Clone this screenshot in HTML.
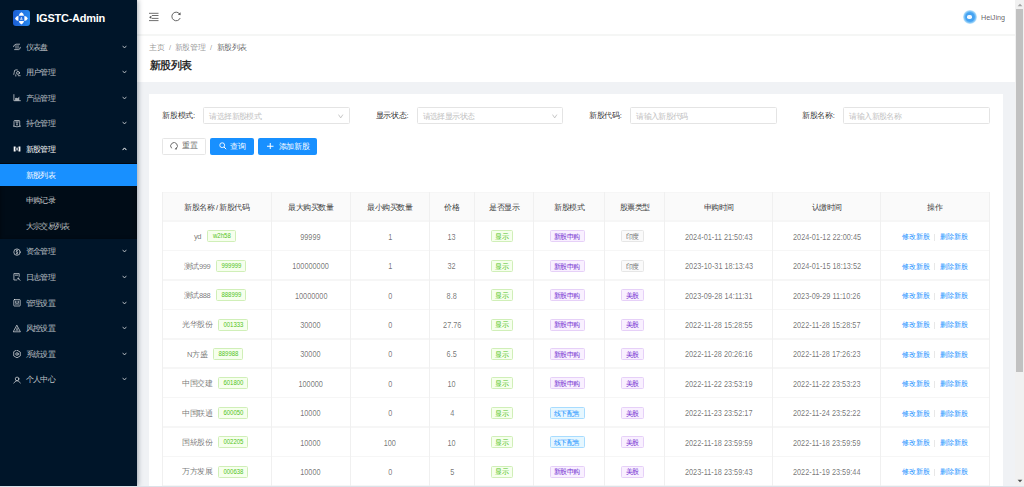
<!DOCTYPE html>
<html><head><meta charset="utf-8">
<style>
*{box-sizing:border-box;margin:0;padding:0}
html,body{width:1024px;height:487px;overflow:hidden;background:#f0f2f5;font-family:"Liberation Sans",sans-serif;}
#side{position:absolute;left:0;top:0;width:136.5px;height:485.5px;background:#001529;box-shadow:1px 0 5px rgba(0,21,41,.35);z-index:3;overflow:hidden}
#logo{position:absolute;left:13.2px;top:9.7px;width:16.8px;height:16.8px;border-radius:3px;background:linear-gradient(90deg,#1c5ed4,#2588f0)}
#brand{position:absolute;left:36.3px;top:9px;font-size:11px;letter-spacing:-0.25px;font-weight:bold;color:#fff;line-height:18px;white-space:nowrap}
.mi{position:absolute;left:0;width:136.5px;height:20px;color:rgba(255,255,255,.65);font-size:7.7px;line-height:20px;white-space:nowrap}
.mi .t{position:absolute;left:25.7px;top:0.6px;letter-spacing:-0.7px}
.mi svg{position:absolute}
#sub{position:absolute;left:0;top:162.5px;width:136.5px;height:76.5px;background:#000c17;box-shadow:inset 0 1px 4px rgba(0,0,0,.45)}
#act{position:absolute;left:0;top:164px;width:136.5px;height:22px;background:#1890ff}
#hdr{position:absolute;left:137px;top:0;width:879px;height:36px;background:#fff;border-bottom:2px solid #f5f6f5}
#crumb{position:absolute;left:137px;top:36px;width:879px;height:45.5px;background:#fff}
#sb{position:absolute;left:1015px;top:0;width:9px;height:487px;background:#f1f1f1;z-index:4}
#thumb{position:absolute;left:1.3px;top:9px;width:6.8px;height:363px;background:#c1c1c1}
#bstrip{position:absolute;left:0;top:485.5px;width:1024px;height:1.5px;background:#dce2e9;z-index:5}
#card{position:absolute;left:149px;top:94px;width:854px;height:400px;background:#fff}
.txt{position:absolute;white-space:nowrap}
.lbl{position:absolute;font-size:7.7px;letter-spacing:-0.3px;color:rgba(0,0,0,.85);line-height:10px;white-space:nowrap}
.inp{position:absolute;top:107px;width:147px;height:17px;border:1px solid #e4e4e4;border-radius:1.5px;background:#fff;font-size:7.7px;letter-spacing:-0.65px;line-height:15px;color:#bfbfbf;padding-left:6px;white-space:nowrap}
.btn{position:absolute;top:137.5px;height:17px;border-radius:2px;font-size:7.7px;line-height:15px;white-space:nowrap}
table{position:absolute;left:162px;top:192px;border-collapse:collapse;table-layout:fixed;font-size:7.6px;color:rgba(0,0,0,.65)}
td,th{border:0.8px solid #ebebeb;text-align:center;white-space:nowrap;font-weight:normal}
th{background:#fafafa;color:rgba(0,0,0,.85);height:29px}
td{height:29.4px}
.tag{position:relative;top:-0.8px;display:inline-block;border:1px solid;border-radius:1.5px;font-size:7px;letter-spacing:-0.6px;line-height:10px;height:12px;padding:0.7px 4px 0 3.4px;vertical-align:middle;margin-right:4.4px}
.tag.n{padding:0 3.8px;letter-spacing:0}
.numt{display:inline-block;font-size:7.9px;line-height:10px;height:10px;vertical-align:top;text-align:center;transform:scaleX(.76)}
.g{color:#52c41a;background:#f6ffed;border-color:#d0efb8}
.p{color:#722ed1;background:#f9f0ff;border-color:#e6d0f8}
.d{color:rgba(0,0,0,.6);background:#fafafa;border-color:#e6e6e6}
.cy{color:#1890ff;background:#e6f7ff;border-color:#a8dcff}
.num{display:inline-block;position:relative;top:0.5px;font-size:8.2px;transform:scaleX(.895);line-height:12px}
.lk{color:#1890ff;font-size:7.4px;letter-spacing:-0.1px}
.cell{position:absolute;height:12px;line-height:12px;text-align:center;white-space:nowrap}
.dv{display:inline-block;width:1px;height:7px;background:#e8e8e8;margin:0 4.5px;vertical-align:middle}
</style></head><body>
<div id="side">
<div id="sub"></div>
<div id="act"></div>
<div id="logo"><svg width="16.8" height="16.8" viewBox="0 0 17 17" style="position:absolute;left:0;top:0"><g fill="#fff"><path d="M8.5 2.3 Q10.6 3.2 11.2 5.8 H5.8 Q6.4 3.2 8.5 2.3 Z"/><path d="M5.8 11.2 H11.2 Q10.6 13.8 8.5 14.7 Q6.4 13.8 5.8 11.2 Z"/><path d="M2.3 8.5 Q3.2 6.4 5.8 5.8 V11.2 Q3.2 10.6 2.3 8.5 Z" transform="translate(-0.3 0)"/><path d="M14.7 8.5 Q13.8 6.4 11.2 5.8 V11.2 Q13.8 10.6 14.7 8.5 Z" transform="translate(0.3 0)"/></g><rect x="6.3" y="6.3" width="4.4" height="4.4" fill="#1f6ae0"/><path d="M7.6 10.2 L8.5 7.3 L9.4 10.2 M7.9 9.3 H9.1" stroke="#fff" stroke-width="0.6" fill="none"/></svg></div>
<div id="brand">IGSTC-Admin</div>
<div class="mi" style="top:37.00px;color:rgba(255,255,255,.65)"><svg style="left:12.5px;top:6px" width="8" height="8" viewBox="0 0 8 8"><path d="M0.5 3.7 Q1.2 1.3 3 1.2 H6.6" stroke="rgba(255,255,255,.65)" stroke-width="0.95" fill="none" stroke-linecap="round" stroke-linejoin="round"/><path d="M3 2.6 V5.3 M5 2.6 V5.3" stroke="rgba(255,255,255,.65)" stroke-width="0.95" fill="none" stroke-linecap="round" stroke-linejoin="round"/><path d="M1.6 6.6 H5.6 Q7.2 6.4 7.4 4.3" stroke="rgba(255,255,255,.65)" stroke-width="0.95" fill="none" stroke-linecap="round" stroke-linejoin="round"/></svg><span class="t" style="color:rgba(255,255,255,.74)">仪表盘</span><svg style="left:122px;top:7.7px" width="5" height="4" viewBox="0 0 5 4"><path d="M0.6 0.8 L2.5 3 L4.4 0.8" stroke="rgba(255,255,255,.65)" stroke-width="1" fill="none"/></svg></div>
<div class="mi" style="top:62.60px;color:rgba(255,255,255,.65)"><svg style="left:12.5px;top:6px" width="8" height="8" viewBox="0 0 8 8"><circle cx="5" cy="3.9" r="1.45" stroke="rgba(255,255,255,.65)" stroke-width="0.95" fill="none" stroke-linecap="round" stroke-linejoin="round"/><path d="M0.8 5.4 Q1.2 3.6 1.6 1.4 Q2.8 0.5 4.4 0.9" stroke="rgba(255,255,255,.65)" stroke-width="0.95" fill="none" stroke-linecap="round" stroke-linejoin="round"/><path d="M2.8 5.8 V7.1 M5.3 6.7 H7.2" stroke="rgba(255,255,255,.65)" stroke-width="0.95" fill="none" stroke-linecap="round" stroke-linejoin="round"/></svg><span class="t" style="color:rgba(255,255,255,.74)">用户管理</span><svg style="left:122px;top:7.7px" width="5" height="4" viewBox="0 0 5 4"><path d="M0.6 0.8 L2.5 3 L4.4 0.8" stroke="rgba(255,255,255,.65)" stroke-width="1" fill="none"/></svg></div>
<div class="mi" style="top:88.20px;color:rgba(255,255,255,.65)"><svg style="left:12.5px;top:6px" width="8" height="8" viewBox="0 0 8 8"><path d="M0.9 0.6 V6.7 H7.4" stroke="rgba(255,255,255,.65)" stroke-width="0.95" fill="none" stroke-linecap="round" stroke-linejoin="round"/><path d="M2.1 6.6 V4 L3.4 3.7 L4.7 4.3 L6.3 2.6 V6.6 Z" fill="rgba(255,255,255,.65)"/></svg><span class="t" style="color:rgba(255,255,255,.74)">产品管理</span><svg style="left:122px;top:7.7px" width="5" height="4" viewBox="0 0 5 4"><path d="M0.6 0.8 L2.5 3 L4.4 0.8" stroke="rgba(255,255,255,.65)" stroke-width="1" fill="none"/></svg></div>
<div class="mi" style="top:113.80px;color:rgba(255,255,255,.65)"><svg style="left:12.5px;top:6px" width="8" height="8" viewBox="0 0 8 8"><path d="M1 5.8 V1.2 Q1 0.5 1.7 0.5 H6 Q6.7 0.5 6.7 1.2 V5.8" stroke="rgba(255,255,255,.65)" stroke-width="0.95" fill="none" stroke-linecap="round" stroke-linejoin="round"/><path d="M0.4 6.2 Q4 7.6 7.6 6.2" stroke="rgba(255,255,255,.65)" stroke-width="0.95" fill="none" stroke-linecap="round" stroke-linejoin="round"/><path d="M2.7 1.9 H5.4 M4 2.3 V5.2" stroke="rgba(255,255,255,.65)" stroke-width="0.95" fill="none" stroke-linecap="round" stroke-linejoin="round"/><path d="M3.3 5 H4.7 L4 3.8 Z" fill="rgba(255,255,255,.65)"/></svg><span class="t" style="color:rgba(255,255,255,.74)">持仓管理</span><svg style="left:122px;top:7.7px" width="5" height="4" viewBox="0 0 5 4"><path d="M0.6 0.8 L2.5 3 L4.4 0.8" stroke="rgba(255,255,255,.65)" stroke-width="1" fill="none"/></svg></div>
<div class="mi" style="top:139.40px;color:#fff"><svg style="left:12.5px;top:6px" width="8" height="8" viewBox="0 0 8 8"><path d="M0.7 1.4 H2.6 V3.2 L2.1 4 L2.6 4.8 V6.5 H0.7 Z" fill="#fff"/><path d="M7.4 1.4 H5.5 V3.2 L6 4 L5.5 4.8 V6.5 H7.4 Z" fill="#fff"/><path d="M4.05 1.8 L4.8 4 L4.05 6.3 L3.3 4 Z" fill="#fff"/></svg><span class="t" style="color:#fff">新股管理</span><svg style="left:122px;top:7.7px" width="5" height="4" viewBox="0 0 5 4"><path d="M0.6 3.1 L2.5 0.9 L4.4 3.1" stroke="#fff" stroke-width="1" fill="none"/></svg></div>
<div class="mi" style="top:165.00px;color:#fff"><span class="t" style="color:#fff">新股列表</span></div>
<div class="mi" style="top:190.60px;color:rgba(255,255,255,.65)"><span class="t" style="color:rgba(255,255,255,.74)">申购记录</span></div>
<div class="mi" style="top:216.20px;color:rgba(255,255,255,.65)"><span class="t" style="color:rgba(255,255,255,.74)">大宗交易列表</span></div>
<div class="mi" style="top:241.80px;color:rgba(255,255,255,.65)"><svg style="left:12.5px;top:6px" width="8" height="8" viewBox="0 0 8 8"><circle cx="4" cy="4.1" r="3.2" stroke="rgba(255,255,255,.65)" stroke-width="0.95" fill="none" stroke-linecap="round" stroke-linejoin="round"/><path d="M4.8 2.5 Q3.3 2 3.1 3.1 Q3.2 3.9 4 4.1 Q4.9 4.4 4.6 5.3 Q4 5.9 3 5.4 M4 1.6 V6.6" stroke="rgba(255,255,255,.65)" stroke-width="0.75" fill="none"/></svg><span class="t" style="color:rgba(255,255,255,.74)">资金管理</span><svg style="left:122px;top:7.7px" width="5" height="4" viewBox="0 0 5 4"><path d="M0.6 0.8 L2.5 3 L4.4 0.8" stroke="rgba(255,255,255,.65)" stroke-width="1" fill="none"/></svg></div>
<div class="mi" style="top:267.40px;color:rgba(255,255,255,.65)"><svg style="left:12.5px;top:6px" width="8" height="8" viewBox="0 0 8 8"><path d="M6.2 3.4 V0.6 H0.9 V7 H3.8" stroke="rgba(255,255,255,.65)" stroke-width="0.95" fill="none" stroke-linecap="round" stroke-linejoin="round"/><path d="M2.3 2.2 H4.8" stroke="rgba(255,255,255,.65)" stroke-width="0.95" fill="none" stroke-linecap="round" stroke-linejoin="round"/><circle cx="5.3" cy="5.6" r="1" fill="rgba(255,255,255,.65)"/><path d="M6 6.3 L7.2 7.3" stroke="rgba(255,255,255,.65)" stroke-width="0.95" fill="none" stroke-linecap="round" stroke-linejoin="round"/></svg><span class="t" style="color:rgba(255,255,255,.74)">日志管理</span><svg style="left:122px;top:7.7px" width="5" height="4" viewBox="0 0 5 4"><path d="M0.6 0.8 L2.5 3 L4.4 0.8" stroke="rgba(255,255,255,.65)" stroke-width="1" fill="none"/></svg></div>
<div class="mi" style="top:293.00px;color:rgba(255,255,255,.65)"><svg style="left:12.5px;top:6px" width="8" height="8" viewBox="0 0 8 8"><rect x="0.8" y="0.6" width="6.4" height="6.4" rx="0.6" stroke="rgba(255,255,255,.65)" stroke-width="0.95" fill="none" stroke-linecap="round" stroke-linejoin="round"/><path d="M2.6 1.5 V6 M4 1.5 V6 M5.4 1.5 V6" stroke="rgba(255,255,255,.65)" stroke-width="0.55"/><path d="M2.6 2.4 V3.4 M4 4.2 V5.2 M5.4 2.4 V3.4" stroke="rgba(255,255,255,.65)" stroke-width="1.2"/></svg><span class="t" style="color:rgba(255,255,255,.74)">管理设置</span><svg style="left:122px;top:7.7px" width="5" height="4" viewBox="0 0 5 4"><path d="M0.6 0.8 L2.5 3 L4.4 0.8" stroke="rgba(255,255,255,.65)" stroke-width="1" fill="none"/></svg></div>
<div class="mi" style="top:318.60px;color:rgba(255,255,255,.65)"><svg style="left:12.5px;top:6px" width="8" height="8" viewBox="0 0 8 8"><path d="M4 0.5 L7.4 6.8 H0.6 Z" stroke="rgba(255,255,255,.65)" stroke-width="0.95" fill="none" stroke-linecap="round" stroke-linejoin="round"/><circle cx="4" cy="3.2" r="0.7" fill="rgba(255,255,255,.65)"/><path d="M3 6 L3.4 4.6 H4.6 L5 6" stroke="rgba(255,255,255,.65)" stroke-width="0.8" fill="none"/></svg><span class="t" style="color:rgba(255,255,255,.74)">风控设置</span><svg style="left:122px;top:7.7px" width="5" height="4" viewBox="0 0 5 4"><path d="M0.6 0.8 L2.5 3 L4.4 0.8" stroke="rgba(255,255,255,.65)" stroke-width="1" fill="none"/></svg></div>
<div class="mi" style="top:344.20px;color:rgba(255,255,255,.65)"><svg style="left:12.5px;top:6px" width="8" height="8" viewBox="0 0 8 8"><path d="M4 0.2 L7.3 2.1 V5.9 L4 7.8 L0.7 5.9 V2.1 Z" stroke="rgba(255,255,255,.65)" stroke-width="0.95" fill="none" stroke-linecap="round" stroke-linejoin="round"/><circle cx="4" cy="4" r="1.3" stroke="rgba(255,255,255,.65)" stroke-width="0.95" fill="none" stroke-linecap="round" stroke-linejoin="round"/></svg><span class="t" style="color:rgba(255,255,255,.74)">系统设置</span><svg style="left:122px;top:7.7px" width="5" height="4" viewBox="0 0 5 4"><path d="M0.6 0.8 L2.5 3 L4.4 0.8" stroke="rgba(255,255,255,.65)" stroke-width="1" fill="none"/></svg></div>
<div class="mi" style="top:369.80px;color:rgba(255,255,255,.65)"><svg style="left:12.5px;top:6px" width="8" height="8" viewBox="0 0 8 8"><circle cx="4.1" cy="2.9" r="1.8" stroke="rgba(255,255,255,.65)" stroke-width="0.95" fill="none" stroke-linecap="round" stroke-linejoin="round"/><path d="M0.8 7 L2.8 5.1 M5.4 5.1 L7.4 7" stroke="rgba(255,255,255,.65)" stroke-width="0.95" fill="none" stroke-linecap="round" stroke-linejoin="round"/><path d="M2.8 5.1 H5.4" stroke="rgba(255,255,255,.65)" stroke-width="0.6"/></svg><span class="t" style="color:rgba(255,255,255,.74)">个人中心</span><svg style="left:122px;top:7.7px" width="5" height="4" viewBox="0 0 5 4"><path d="M0.6 0.8 L2.5 3 L4.4 0.8" stroke="rgba(255,255,255,.65)" stroke-width="1" fill="none"/></svg></div>
</div>
<div id="hdr"><svg style="position:absolute;left:11.8px;top:12px" width="10" height="10" viewBox="0 0 10 10"><path d="M0 1.3 H9.5 M3 3.5 H9.5 M3 6.4 H9.5 M0 8.6 H9.5" stroke="#555" stroke-width="0.85"/><path d="M0.1 5.2 L2.4 3.6 V6.9 Z" fill="#555"/></svg><svg style="position:absolute;left:33.5px;top:10.5px" width="11" height="11" viewBox="0 0 11 11"><path d="M8.9 3.3 A4.3 4.3 0 1 0 9.2 7" stroke="#555" stroke-width="0.9" fill="none"/><path d="M9.6 1.3 L9.5 4.2 L6.8 3.6 Z" fill="#555"/></svg><div style="position:absolute;left:826.3px;top:9.8px;width:14px;height:14px;border-radius:50%;background:radial-gradient(circle closest-side,#45a3f2 0,#45a3f2 62%,#8fcdf8 85%,#cfeafc 100%)"></div><div style="position:absolute;left:829.6px;top:15.4px;width:5.6px;height:3.9px;border-radius:1.8px;background:#f4f9ff"></div><div class="txt" style="left:844px;top:11.5px;font-size:7.2px;line-height:12px;color:rgba(0,0,0,.65)">HeiJing</div></div>
<div id="crumb"><div class="txt" style="left:12.3px;top:6.6px;font-size:7.5px;line-height:10px;color:rgba(0,0,0,.45)">主页</div><div class="txt" style="left:32px;top:6.6px;font-size:7.5px;line-height:10px;color:rgba(0,0,0,.45)">/</div><div class="txt" style="left:37.8px;top:6.6px;font-size:7.5px;letter-spacing:-0.35px;line-height:10px;color:rgba(0,0,0,.45)">新股管理</div><div class="txt" style="left:73px;top:6.6px;font-size:7.5px;line-height:10px;color:rgba(0,0,0,.45)">/</div><div class="txt" style="left:80px;top:6.6px;font-size:7.5px;letter-spacing:-0.55px;line-height:10px;color:rgba(0,0,0,.65)">新股列表</div><div class="txt" style="left:12.5px;top:22.1px;font-size:11px;letter-spacing:-0.5px;line-height:14px;font-weight:bold;color:rgba(0,0,0,.85)">新股列表</div></div>
<div id="card"></div>
<div class="lbl" style="left:162.2px;top:110.5px">新股模式:</div>
<div class="inp" style="left:203.3px;top:107.2px;width:146.5px;height:17.3px"><span style="position:absolute;left:5.2px;top:0.5px">请选择新股模式</span><svg style="position:absolute;left:134.1px;top:5.6px" width="6" height="5" viewBox="0 0 6 5"><path d="M0.5 0.6 L2.7 3.9 L4.9 0.6" stroke="#bdbdbd" stroke-width="0.85" fill="none"/></svg></div>
<div class="lbl" style="left:375.6px;top:110.5px">显示状态:</div>
<div class="inp" style="left:416.6px;top:107.2px;width:146.5px;height:17.3px"><span style="position:absolute;left:5.2px;top:0.5px">请选择显示状态</span><svg style="position:absolute;left:134.1px;top:5.6px" width="6" height="5" viewBox="0 0 6 5"><path d="M0.5 0.6 L2.7 3.9 L4.9 0.6" stroke="#bdbdbd" stroke-width="0.85" fill="none"/></svg></div>
<div class="lbl" style="left:588.9px;top:110.5px">新股代码:</div>
<div class="inp" style="left:630.2px;top:107.2px;width:146.5px;height:17.3px"><span style="position:absolute;left:5.2px;top:0.5px">请输入新股代码</span></div>
<div class="lbl" style="left:802.0px;top:110.5px">新股名称:</div>
<div class="inp" style="left:843.3px;top:107.2px;width:146.5px;height:17.3px"><span style="position:absolute;left:5.2px;top:0.5px">请输入新股名称</span></div>
<div class="btn" style="left:162.4px;width:43.2px;border:1px solid #e6e6e6;border-radius:1.5px;background:#fff;color:rgba(0,0,0,.65)"><svg style="position:absolute;left:7.0px;top:3.4px" width="8" height="8" viewBox="0 0 8 8"><path d="M1.7 6.3 A3.35 3.35 0 1 1 5.9 6.7" stroke="#555" stroke-width="0.85" fill="none"/><path d="M4.6 7.3 L6.6 5.3 L6.8 7.4 Z" fill="#555"/></svg><span style="position:absolute;left:18.8px;top:-0.1px;letter-spacing:-0.4px">重置</span></div>
<div class="btn" style="left:210.1px;width:43.9px;background:#1890ff;color:#fff"><svg style="position:absolute;left:8.5px;top:4.3px" width="8" height="8" viewBox="0 0 8 8"><circle cx="3.2" cy="3.2" r="2.4" stroke="#fff" stroke-width="0.9" fill="none"/><path d="M5 5 L7.2 7.2" stroke="#fff" stroke-width="1"/></svg><span style="position:absolute;left:20.2px;top:1px;letter-spacing:-0.3px">查询</span></div>
<div class="btn" style="left:258.2px;width:58.8px;background:#1890ff;color:#fff"><svg style="position:absolute;left:9.3px;top:5.2px" width="6.5" height="6.5" viewBox="0 0 6.5 6.5"><path d="M3.25 0 V6.5 M0 3.25 H6.5" stroke="#fff" stroke-width="1"/></svg><span style="position:absolute;left:20.6px;top:1px;letter-spacing:-0.4px">添加新股</span></div>
<div id="tbl">
<div style="position:absolute;left:162.2px;top:192.0px;width:827.0999999999999px;height:29.5px;background:#fafafa"></div>
<div style="position:absolute;left:162.2px;top:191.80px;width:827.0999999999999px;height:1.6px;background:#f6f6f6"></div>
<div style="position:absolute;left:162.2px;top:220.40px;width:827.0999999999999px;height:1.6px;background:#f6f6f6"></div>
<div style="position:absolute;left:162.2px;top:249.80px;width:827.0999999999999px;height:1.6px;background:#f6f6f6"></div>
<div style="position:absolute;left:162.2px;top:279.20px;width:827.0999999999999px;height:1.6px;background:#f6f6f6"></div>
<div style="position:absolute;left:162.2px;top:308.60px;width:827.0999999999999px;height:1.6px;background:#f6f6f6"></div>
<div style="position:absolute;left:162.2px;top:338.00px;width:827.0999999999999px;height:1.6px;background:#f6f6f6"></div>
<div style="position:absolute;left:162.2px;top:367.40px;width:827.0999999999999px;height:1.6px;background:#f6f6f6"></div>
<div style="position:absolute;left:162.2px;top:396.80px;width:827.0999999999999px;height:1.6px;background:#f6f6f6"></div>
<div style="position:absolute;left:162.2px;top:426.20px;width:827.0999999999999px;height:1.6px;background:#f6f6f6"></div>
<div style="position:absolute;left:162.2px;top:455.60px;width:827.0999999999999px;height:1.6px;background:#f6f6f6"></div>
<div style="position:absolute;left:162.2px;top:485.00px;width:827.0999999999999px;height:1.6px;background:#f6f6f6"></div>
<div style="position:absolute;left:161.70px;top:192.0px;width:1px;height:294.09999999999997px;background:#f0f0f0"></div>
<div style="position:absolute;left:270.90px;top:192.0px;width:1px;height:294.09999999999997px;background:#f0f0f0"></div>
<div style="position:absolute;left:349.80px;top:192.0px;width:1px;height:294.09999999999997px;background:#f0f0f0"></div>
<div style="position:absolute;left:429.10px;top:192.0px;width:1px;height:294.09999999999997px;background:#f0f0f0"></div>
<div style="position:absolute;left:473.90px;top:192.0px;width:1px;height:294.09999999999997px;background:#f0f0f0"></div>
<div style="position:absolute;left:533.30px;top:192.0px;width:1px;height:294.09999999999997px;background:#f0f0f0"></div>
<div style="position:absolute;left:604.20px;top:192.0px;width:1px;height:294.09999999999997px;background:#f0f0f0"></div>
<div style="position:absolute;left:664.20px;top:192.0px;width:1px;height:294.09999999999997px;background:#f0f0f0"></div>
<div style="position:absolute;left:772.30px;top:192.0px;width:1px;height:294.09999999999997px;background:#f0f0f0"></div>
<div style="position:absolute;left:880.10px;top:192.0px;width:1px;height:294.09999999999997px;background:#f0f0f0"></div>
<div style="position:absolute;left:988.80px;top:192.0px;width:1px;height:294.09999999999997px;background:#f0f0f0"></div>
<div class="cell" style="left:162.2px;width:109.19999999999999px;top:202.15px;color:rgba(0,0,0,.8);font-size:7.5px"><span style="letter-spacing:-0.45px">新股名称 / 新股代码</span></div>
<div class="cell" style="left:271.4px;width:78.90000000000003px;top:202.15px;color:rgba(0,0,0,.8);font-size:7.5px"><span style="letter-spacing:-0.45px">最大购买数量</span></div>
<div class="cell" style="left:350.3px;width:79.30000000000001px;top:202.15px;color:rgba(0,0,0,.8);font-size:7.5px"><span style="letter-spacing:-0.45px">最小购买数量</span></div>
<div class="cell" style="left:429.6px;width:44.799999999999955px;top:202.15px;color:rgba(0,0,0,.8);font-size:7.5px"><span style="letter-spacing:-0.45px">价格</span></div>
<div class="cell" style="left:474.4px;width:59.39999999999998px;top:202.15px;color:rgba(0,0,0,.8);font-size:7.5px"><span style="letter-spacing:-0.45px">是否显示</span></div>
<div class="cell" style="left:533.8px;width:70.90000000000009px;top:202.15px;color:rgba(0,0,0,.8);font-size:7.5px"><span style="letter-spacing:-0.45px">新股模式</span></div>
<div class="cell" style="left:604.7px;width:60.0px;top:202.15px;color:rgba(0,0,0,.8);font-size:7.5px"><span style="letter-spacing:-0.45px">股票类型</span></div>
<div class="cell" style="left:664.7px;width:108.09999999999991px;top:202.15px;color:rgba(0,0,0,.8);font-size:7.5px"><span style="letter-spacing:-0.45px">申购时间</span></div>
<div class="cell" style="left:772.8px;width:107.80000000000007px;top:202.15px;color:rgba(0,0,0,.8);font-size:7.5px"><span style="letter-spacing:-0.45px">认缴时间</span></div>
<div class="cell" style="left:880.6px;width:108.69999999999993px;top:202.15px;color:rgba(0,0,0,.8);font-size:7.5px"><span style="letter-spacing:-0.45px">操作</span></div>
<div class="cell" style="left:162.2px;width:109.19999999999999px;top:231.20px;color:rgba(0,0,0,.56);font-size:7.5px"><span style="letter-spacing:-0.4px">yd</span><span class="tag g n" style="margin-left:6px;margin-right:3.3px"><span class="numt" style="width:25.79px;margin:0 -3.09px">w2h58</span></span></div>
<div class="cell" style="left:271.4px;width:78.90000000000003px;top:231.20px;color:rgba(0,0,0,.56);font-size:7.5px"><span class="num">99999</span></div>
<div class="cell" style="left:350.3px;width:79.30000000000001px;top:231.20px;color:rgba(0,0,0,.56);font-size:7.5px"><span class="num">1</span></div>
<div class="cell" style="left:429.6px;width:44.799999999999955px;top:231.20px;color:rgba(0,0,0,.56);font-size:7.5px"><span class="num">13</span></div>
<div class="cell" style="left:474.4px;width:59.39999999999998px;top:231.20px;color:rgba(0,0,0,.56);font-size:7.5px"><span class="tag g">显示</span></div>
<div class="cell" style="left:533.8px;width:70.90000000000009px;top:231.20px;color:rgba(0,0,0,.56);font-size:7.5px"><span class="tag p">新股申购</span></div>
<div class="cell" style="left:604.7px;width:60.0px;top:231.20px;color:rgba(0,0,0,.56);font-size:7.5px"><span class="tag d">印度</span></div>
<div class="cell" style="left:664.7px;width:108.09999999999991px;top:231.20px;color:rgba(0,0,0,.56);font-size:7.5px"><span class="num">2024-01-11 21:50:43</span></div>
<div class="cell" style="left:772.8px;width:107.80000000000007px;top:231.20px;color:rgba(0,0,0,.56);font-size:7.5px"><span class="num">2024-01-12 22:00:45</span></div>
<div class="cell" style="left:880.6px;width:108.69999999999993px;top:231.20px;color:rgba(0,0,0,.56);font-size:7.5px"><span class="lk">修改新股</span><span class="dv"></span><span class="lk">删除新股</span></div>
<div class="cell" style="left:162.2px;width:109.19999999999999px;top:260.60px;color:rgba(0,0,0,.56);font-size:7.5px"><span style="letter-spacing:-0.4px">测试999</span><span class="tag g n" style="margin-left:6px;margin-right:3.3px"><span class="numt" style="width:26.84px;margin:0 -3.22px">999999</span></span></div>
<div class="cell" style="left:271.4px;width:78.90000000000003px;top:260.60px;color:rgba(0,0,0,.56);font-size:7.5px"><span class="num">100000000</span></div>
<div class="cell" style="left:350.3px;width:79.30000000000001px;top:260.60px;color:rgba(0,0,0,.56);font-size:7.5px"><span class="num">1</span></div>
<div class="cell" style="left:429.6px;width:44.799999999999955px;top:260.60px;color:rgba(0,0,0,.56);font-size:7.5px"><span class="num">32</span></div>
<div class="cell" style="left:474.4px;width:59.39999999999998px;top:260.60px;color:rgba(0,0,0,.56);font-size:7.5px"><span class="tag g">显示</span></div>
<div class="cell" style="left:533.8px;width:70.90000000000009px;top:260.60px;color:rgba(0,0,0,.56);font-size:7.5px"><span class="tag p">新股申购</span></div>
<div class="cell" style="left:604.7px;width:60.0px;top:260.60px;color:rgba(0,0,0,.56);font-size:7.5px"><span class="tag d">印度</span></div>
<div class="cell" style="left:664.7px;width:108.09999999999991px;top:260.60px;color:rgba(0,0,0,.56);font-size:7.5px"><span class="num">2023-10-31 18:13:43</span></div>
<div class="cell" style="left:772.8px;width:107.80000000000007px;top:260.60px;color:rgba(0,0,0,.56);font-size:7.5px"><span class="num">2024-01-15 18:13:52</span></div>
<div class="cell" style="left:880.6px;width:108.69999999999993px;top:260.60px;color:rgba(0,0,0,.56);font-size:7.5px"><span class="lk">修改新股</span><span class="dv"></span><span class="lk">删除新股</span></div>
<div class="cell" style="left:162.2px;width:109.19999999999999px;top:290.00px;color:rgba(0,0,0,.56);font-size:7.5px"><span style="letter-spacing:-0.4px">测试888</span><span class="tag g n" style="margin-left:6px;margin-right:3.3px"><span class="numt" style="width:26.84px;margin:0 -3.22px">888999</span></span></div>
<div class="cell" style="left:271.4px;width:78.90000000000003px;top:290.00px;color:rgba(0,0,0,.56);font-size:7.5px"><span class="num">10000000</span></div>
<div class="cell" style="left:350.3px;width:79.30000000000001px;top:290.00px;color:rgba(0,0,0,.56);font-size:7.5px"><span class="num">0</span></div>
<div class="cell" style="left:429.6px;width:44.799999999999955px;top:290.00px;color:rgba(0,0,0,.56);font-size:7.5px"><span class="num">8.8</span></div>
<div class="cell" style="left:474.4px;width:59.39999999999998px;top:290.00px;color:rgba(0,0,0,.56);font-size:7.5px"><span class="tag g">显示</span></div>
<div class="cell" style="left:533.8px;width:70.90000000000009px;top:290.00px;color:rgba(0,0,0,.56);font-size:7.5px"><span class="tag p">新股申购</span></div>
<div class="cell" style="left:604.7px;width:60.0px;top:290.00px;color:rgba(0,0,0,.56);font-size:7.5px"><span class="tag p">美股</span></div>
<div class="cell" style="left:664.7px;width:108.09999999999991px;top:290.00px;color:rgba(0,0,0,.56);font-size:7.5px"><span class="num">2023-09-28 14:11:31</span></div>
<div class="cell" style="left:772.8px;width:107.80000000000007px;top:290.00px;color:rgba(0,0,0,.56);font-size:7.5px"><span class="num">2023-09-29 11:10:26</span></div>
<div class="cell" style="left:880.6px;width:108.69999999999993px;top:290.00px;color:rgba(0,0,0,.56);font-size:7.5px"><span class="lk">修改新股</span><span class="dv"></span><span class="lk">删除新股</span></div>
<div class="cell" style="left:162.2px;width:109.19999999999999px;top:319.40px;color:rgba(0,0,0,.56);font-size:7.5px"><span style="letter-spacing:-0.4px">光华股份</span><span class="tag g n" style="margin-left:6px;margin-right:3.3px"><span class="numt" style="width:26.84px;margin:0 -3.22px">001333</span></span></div>
<div class="cell" style="left:271.4px;width:78.90000000000003px;top:319.40px;color:rgba(0,0,0,.56);font-size:7.5px"><span class="num">30000</span></div>
<div class="cell" style="left:350.3px;width:79.30000000000001px;top:319.40px;color:rgba(0,0,0,.56);font-size:7.5px"><span class="num">0</span></div>
<div class="cell" style="left:429.6px;width:44.799999999999955px;top:319.40px;color:rgba(0,0,0,.56);font-size:7.5px"><span class="num">27.76</span></div>
<div class="cell" style="left:474.4px;width:59.39999999999998px;top:319.40px;color:rgba(0,0,0,.56);font-size:7.5px"><span class="tag g">显示</span></div>
<div class="cell" style="left:533.8px;width:70.90000000000009px;top:319.40px;color:rgba(0,0,0,.56);font-size:7.5px"><span class="tag p">新股申购</span></div>
<div class="cell" style="left:604.7px;width:60.0px;top:319.40px;color:rgba(0,0,0,.56);font-size:7.5px"><span class="tag p">美股</span></div>
<div class="cell" style="left:664.7px;width:108.09999999999991px;top:319.40px;color:rgba(0,0,0,.56);font-size:7.5px"><span class="num">2022-11-28 15:28:55</span></div>
<div class="cell" style="left:772.8px;width:107.80000000000007px;top:319.40px;color:rgba(0,0,0,.56);font-size:7.5px"><span class="num">2022-11-28 15:28:57</span></div>
<div class="cell" style="left:880.6px;width:108.69999999999993px;top:319.40px;color:rgba(0,0,0,.56);font-size:7.5px"><span class="lk">修改新股</span><span class="dv"></span><span class="lk">删除新股</span></div>
<div class="cell" style="left:162.2px;width:109.19999999999999px;top:348.80px;color:rgba(0,0,0,.56);font-size:7.5px"><span style="letter-spacing:-0.4px">N方盛</span><span class="tag g n" style="margin-left:6px;margin-right:3.3px"><span class="numt" style="width:26.84px;margin:0 -3.22px">889988</span></span></div>
<div class="cell" style="left:271.4px;width:78.90000000000003px;top:348.80px;color:rgba(0,0,0,.56);font-size:7.5px"><span class="num">30000</span></div>
<div class="cell" style="left:350.3px;width:79.30000000000001px;top:348.80px;color:rgba(0,0,0,.56);font-size:7.5px"><span class="num">0</span></div>
<div class="cell" style="left:429.6px;width:44.799999999999955px;top:348.80px;color:rgba(0,0,0,.56);font-size:7.5px"><span class="num">6.5</span></div>
<div class="cell" style="left:474.4px;width:59.39999999999998px;top:348.80px;color:rgba(0,0,0,.56);font-size:7.5px"><span class="tag g">显示</span></div>
<div class="cell" style="left:533.8px;width:70.90000000000009px;top:348.80px;color:rgba(0,0,0,.56);font-size:7.5px"><span class="tag p">新股申购</span></div>
<div class="cell" style="left:604.7px;width:60.0px;top:348.80px;color:rgba(0,0,0,.56);font-size:7.5px"><span class="tag p">美股</span></div>
<div class="cell" style="left:664.7px;width:108.09999999999991px;top:348.80px;color:rgba(0,0,0,.56);font-size:7.5px"><span class="num">2022-11-28 20:26:16</span></div>
<div class="cell" style="left:772.8px;width:107.80000000000007px;top:348.80px;color:rgba(0,0,0,.56);font-size:7.5px"><span class="num">2022-11-28 17:26:23</span></div>
<div class="cell" style="left:880.6px;width:108.69999999999993px;top:348.80px;color:rgba(0,0,0,.56);font-size:7.5px"><span class="lk">修改新股</span><span class="dv"></span><span class="lk">删除新股</span></div>
<div class="cell" style="left:162.2px;width:109.19999999999999px;top:378.20px;color:rgba(0,0,0,.56);font-size:7.5px"><span style="letter-spacing:-0.4px">中国交建</span><span class="tag g n" style="margin-left:6px;margin-right:3.3px"><span class="numt" style="width:26.84px;margin:0 -3.22px">601800</span></span></div>
<div class="cell" style="left:271.4px;width:78.90000000000003px;top:378.20px;color:rgba(0,0,0,.56);font-size:7.5px"><span class="num">100000</span></div>
<div class="cell" style="left:350.3px;width:79.30000000000001px;top:378.20px;color:rgba(0,0,0,.56);font-size:7.5px"><span class="num">0</span></div>
<div class="cell" style="left:429.6px;width:44.799999999999955px;top:378.20px;color:rgba(0,0,0,.56);font-size:7.5px"><span class="num">10</span></div>
<div class="cell" style="left:474.4px;width:59.39999999999998px;top:378.20px;color:rgba(0,0,0,.56);font-size:7.5px"><span class="tag g">显示</span></div>
<div class="cell" style="left:533.8px;width:70.90000000000009px;top:378.20px;color:rgba(0,0,0,.56);font-size:7.5px"><span class="tag p">新股申购</span></div>
<div class="cell" style="left:604.7px;width:60.0px;top:378.20px;color:rgba(0,0,0,.56);font-size:7.5px"><span class="tag p">美股</span></div>
<div class="cell" style="left:664.7px;width:108.09999999999991px;top:378.20px;color:rgba(0,0,0,.56);font-size:7.5px"><span class="num">2022-11-22 23:53:19</span></div>
<div class="cell" style="left:772.8px;width:107.80000000000007px;top:378.20px;color:rgba(0,0,0,.56);font-size:7.5px"><span class="num">2022-11-22 23:53:23</span></div>
<div class="cell" style="left:880.6px;width:108.69999999999993px;top:378.20px;color:rgba(0,0,0,.56);font-size:7.5px"><span class="lk">修改新股</span><span class="dv"></span><span class="lk">删除新股</span></div>
<div class="cell" style="left:162.2px;width:109.19999999999999px;top:407.60px;color:rgba(0,0,0,.56);font-size:7.5px"><span style="letter-spacing:-0.4px">中国联通</span><span class="tag g n" style="margin-left:6px;margin-right:3.3px"><span class="numt" style="width:26.84px;margin:0 -3.22px">600050</span></span></div>
<div class="cell" style="left:271.4px;width:78.90000000000003px;top:407.60px;color:rgba(0,0,0,.56);font-size:7.5px"><span class="num">10000</span></div>
<div class="cell" style="left:350.3px;width:79.30000000000001px;top:407.60px;color:rgba(0,0,0,.56);font-size:7.5px"><span class="num">0</span></div>
<div class="cell" style="left:429.6px;width:44.799999999999955px;top:407.60px;color:rgba(0,0,0,.56);font-size:7.5px"><span class="num">4</span></div>
<div class="cell" style="left:474.4px;width:59.39999999999998px;top:407.60px;color:rgba(0,0,0,.56);font-size:7.5px"><span class="tag g">显示</span></div>
<div class="cell" style="left:533.8px;width:70.90000000000009px;top:407.60px;color:rgba(0,0,0,.56);font-size:7.5px"><span class="tag cy">线下配售</span></div>
<div class="cell" style="left:604.7px;width:60.0px;top:407.60px;color:rgba(0,0,0,.56);font-size:7.5px"><span class="tag p">美股</span></div>
<div class="cell" style="left:664.7px;width:108.09999999999991px;top:407.60px;color:rgba(0,0,0,.56);font-size:7.5px"><span class="num">2022-11-23 23:52:17</span></div>
<div class="cell" style="left:772.8px;width:107.80000000000007px;top:407.60px;color:rgba(0,0,0,.56);font-size:7.5px"><span class="num">2022-11-24 23:52:22</span></div>
<div class="cell" style="left:880.6px;width:108.69999999999993px;top:407.60px;color:rgba(0,0,0,.56);font-size:7.5px"><span class="lk">修改新股</span><span class="dv"></span><span class="lk">删除新股</span></div>
<div class="cell" style="left:162.2px;width:109.19999999999999px;top:437.00px;color:rgba(0,0,0,.56);font-size:7.5px"><span style="letter-spacing:-0.4px">国統股份</span><span class="tag g n" style="margin-left:6px;margin-right:3.3px"><span class="numt" style="width:26.84px;margin:0 -3.22px">002205</span></span></div>
<div class="cell" style="left:271.4px;width:78.90000000000003px;top:437.00px;color:rgba(0,0,0,.56);font-size:7.5px"><span class="num">10000</span></div>
<div class="cell" style="left:350.3px;width:79.30000000000001px;top:437.00px;color:rgba(0,0,0,.56);font-size:7.5px"><span class="num">100</span></div>
<div class="cell" style="left:429.6px;width:44.799999999999955px;top:437.00px;color:rgba(0,0,0,.56);font-size:7.5px"><span class="num">10</span></div>
<div class="cell" style="left:474.4px;width:59.39999999999998px;top:437.00px;color:rgba(0,0,0,.56);font-size:7.5px"><span class="tag g">显示</span></div>
<div class="cell" style="left:533.8px;width:70.90000000000009px;top:437.00px;color:rgba(0,0,0,.56);font-size:7.5px"><span class="tag cy">线下配售</span></div>
<div class="cell" style="left:604.7px;width:60.0px;top:437.00px;color:rgba(0,0,0,.56);font-size:7.5px"><span class="tag p">美股</span></div>
<div class="cell" style="left:664.7px;width:108.09999999999991px;top:437.00px;color:rgba(0,0,0,.56);font-size:7.5px"><span class="num">2022-11-18 23:59:59</span></div>
<div class="cell" style="left:772.8px;width:107.80000000000007px;top:437.00px;color:rgba(0,0,0,.56);font-size:7.5px"><span class="num">2022-11-18 23:59:59</span></div>
<div class="cell" style="left:880.6px;width:108.69999999999993px;top:437.00px;color:rgba(0,0,0,.56);font-size:7.5px"><span class="lk">修改新股</span><span class="dv"></span><span class="lk">删除新股</span></div>
<div class="cell" style="left:162.2px;width:109.19999999999999px;top:466.40px;color:rgba(0,0,0,.56);font-size:7.5px"><span style="letter-spacing:-0.4px">万方发展</span><span class="tag g n" style="margin-left:6px;margin-right:3.3px"><span class="numt" style="width:26.84px;margin:0 -3.22px">000638</span></span></div>
<div class="cell" style="left:271.4px;width:78.90000000000003px;top:466.40px;color:rgba(0,0,0,.56);font-size:7.5px"><span class="num">10000</span></div>
<div class="cell" style="left:350.3px;width:79.30000000000001px;top:466.40px;color:rgba(0,0,0,.56);font-size:7.5px"><span class="num">0</span></div>
<div class="cell" style="left:429.6px;width:44.799999999999955px;top:466.40px;color:rgba(0,0,0,.56);font-size:7.5px"><span class="num">5</span></div>
<div class="cell" style="left:474.4px;width:59.39999999999998px;top:466.40px;color:rgba(0,0,0,.56);font-size:7.5px"><span class="tag g">显示</span></div>
<div class="cell" style="left:533.8px;width:70.90000000000009px;top:466.40px;color:rgba(0,0,0,.56);font-size:7.5px"><span class="tag p">新股申购</span></div>
<div class="cell" style="left:604.7px;width:60.0px;top:466.40px;color:rgba(0,0,0,.56);font-size:7.5px"><span class="tag p">美股</span></div>
<div class="cell" style="left:664.7px;width:108.09999999999991px;top:466.40px;color:rgba(0,0,0,.56);font-size:7.5px"><span class="num">2023-11-18 23:59:43</span></div>
<div class="cell" style="left:772.8px;width:107.80000000000007px;top:466.40px;color:rgba(0,0,0,.56);font-size:7.5px"><span class="num">2022-11-19 23:59:44</span></div>
<div class="cell" style="left:880.6px;width:108.69999999999993px;top:466.40px;color:rgba(0,0,0,.56);font-size:7.5px"><span class="lk">修改新股</span><span class="dv"></span><span class="lk">删除新股</span></div>
</div>
<div id="sb"><div id="thumb"></div><svg style="position:absolute;left:1.5px;top:3px" width="6" height="4" viewBox="0 0 6 4"><path d="M0.6 3.3 L3 0.8 L5.4 3.3 Z" fill="#a3a3a3"/></svg><svg style="position:absolute;left:1.5px;top:478.5px" width="6" height="4" viewBox="0 0 6 4"><path d="M0.6 0.8 L3 3.3 L5.4 0.8 Z" fill="#505050"/></svg></div>
<div id="bstrip"></div>
</body></html>
